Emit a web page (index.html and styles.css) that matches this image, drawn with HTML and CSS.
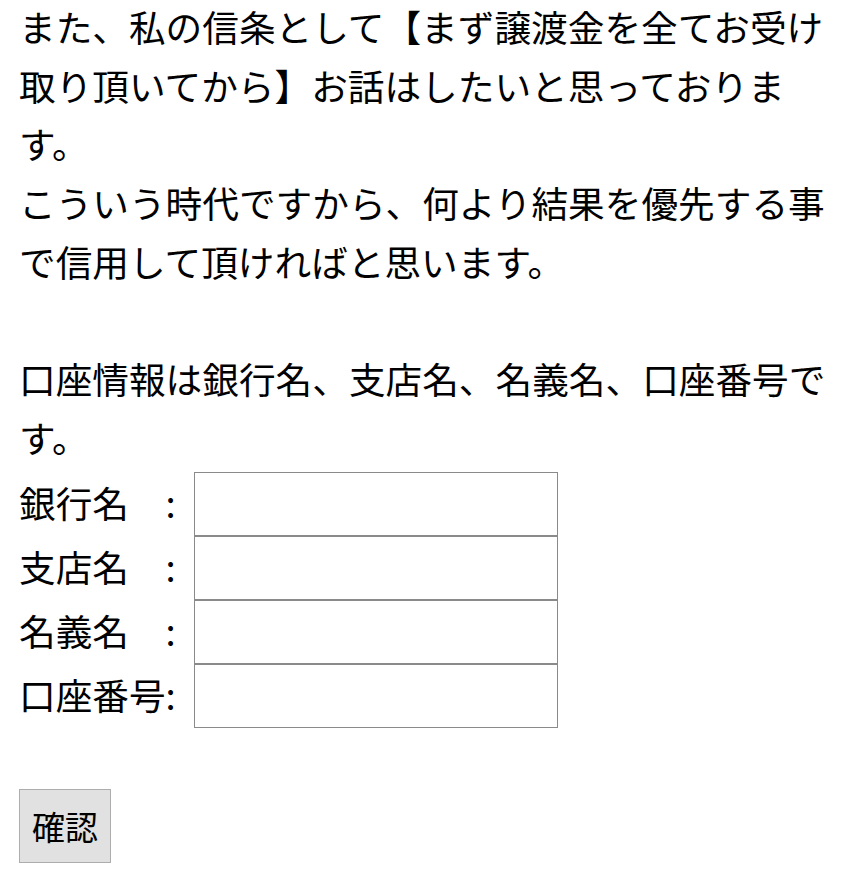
FILE: index.html
```html
<!DOCTYPE html>
<html lang="ja">
<head>
<meta charset="utf-8">
<title>口座情報</title>
<link rel="stylesheet" href="styles.css">
</head>
<body>
<div class="page">
  <p class="message">また、私の信条として【まず譲渡金を全てお受け取り頂いてから】お話はしたいと思っております。<br>こういう時代ですから、何より結果を優先する事で信用して頂ければと思います。<br><br>口座情報は銀行名、支店名、名義名、口座番号です。</p>
  <form class="account-form">
    <div class="row"><label class="label">銀行名　:</label><input class="field" type="text"></div>
    <div class="row"><label class="label">支店名　:</label><input class="field" type="text"></div>
    <div class="row"><label class="label">名義名　:</label><input class="field" type="text"></div>
    <div class="row"><label class="label">口座番号:</label><input class="field" type="text"></div>
    <button class="confirm" type="button">確認</button>
  </form>
</div>
</body>
</html>
```
FILE: styles.css
```css
html, body {
  margin: 0;
  padding: 0;
  background: #ffffff;
}
.page {
  padding: 0 10px 0 19px;
  font-family: "Noto Sans CJK JP", "Noto Sans", sans-serif;
  font-size: 36.67px;
  line-height: 1.6;
  color: #000000;
}
.message {
  margin: -3px 0 0 0;
}
.account-form {
  margin: 6px 0 0 0;
  display: flex;
  flex-direction: column;
  align-items: flex-start;
}
.row {
  display: flex;
  align-items: center;
  height: 64px;
}
.label {
  width: 175px;
  flex: none;
  white-space: pre;
  padding-bottom: 4px;
}
.field {
  box-sizing: border-box;
  width: 364px;
  height: 64px;
  margin: 0;
  border: 1px solid #8a8a8a;
  background: #ffffff;
  font: inherit;
  padding: 0 4px;
}
.confirm {
  margin: 61px 0 0 0;
  box-sizing: border-box;
  width: 92px;
  height: 74px;
  padding: 0;
  background: #e1e1e1;
  border: 1px solid #adadad;
  border-radius: 0;
  font-family: "Noto Sans CJK JP", "Noto Sans", sans-serif;
  font-size: 33px;
  line-height: 1;
  color: #000000;
}
```
